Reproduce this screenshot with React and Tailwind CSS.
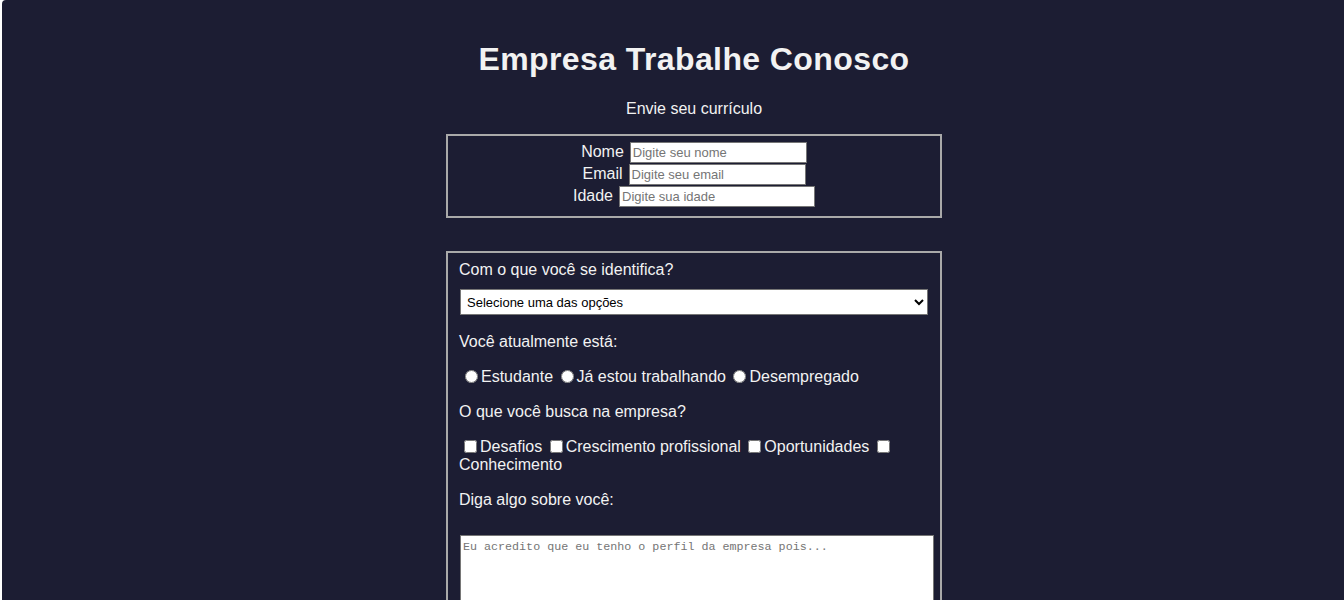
import { useState } from 'react';

export default function App() {
  const [situacao, setSituacao] = useState('');

  return (
    <div className="min-h-[600px] bg-white">
      <div
        className="ml-[2px] min-h-[600px] rounded-tl-[4px] bg-[#1c1d33] text-[#f2f2f2] pt-[40px] pb-10 pl-[42px]"
        style={{ fontFamily: 'Tahoma, "Liberation Sans", Arial, sans-serif' }}
      >
        <h1 className="text-center text-[32px] font-bold leading-[38px] tracking-[0.4px]">Empresa Trabalhe Conosco</h1>
        <p className="mt-[22px] text-center text-[16px] leading-[18px]">Envie seu currículo</p>

        <div className="mx-auto mt-[16px] w-[496px] border-2 border-[#a9a9a9] pt-[5px] pb-[9px]">
          <div className="flex h-[22px] items-center justify-center gap-[6px]">
            <label className="text-[16px]">Nome</label>
            <input
              type="text"
              placeholder="Digite seu nome"
              className="h-[21px] w-[177px] border border-[#767676] bg-white px-[2px] text-[13px] text-black placeholder:text-[#757575]"
            />
          </div>
          <div className="flex h-[22px] items-center justify-center gap-[6px]">
            <label className="text-[16px]">Email</label>
            <input
              type="email"
              placeholder="Digite seu email"
              className="h-[21px] w-[177px] border border-[#767676] bg-white px-[2px] text-[13px] text-black placeholder:text-[#757575]"
            />
          </div>
          <div className="flex h-[22px] items-center justify-center gap-[6px]">
            <label className="text-[16px]">Idade</label>
            <input
              type="text"
              placeholder="Digite sua idade"
              className="h-[21px] w-[196px] border border-[#767676] bg-white px-[2px] text-[13px] text-black placeholder:text-[#757575]"
            />
          </div>
        </div>

        <div className="mx-auto mt-[33px] w-[496px] border-2 border-[#a9a9a9] px-[11px] pt-[8px] pb-4 text-[16px] leading-[18px]">
          <p>Com o que você se identifica?</p>
          <select className="mt-[10px] ml-px block h-[26px] w-[468px] border border-[#767676] bg-white px-[2px] text-[13px] text-black">
            <option>Selecione uma das opções</option>
            <option>Front-end</option>
            <option>Back-end</option>
            <option>Full-stack</option>
          </select>

          <p className="mt-[18px]">Você atualmente está:</p>
          <div className="mt-[17px]">
            <label>
              <input
                type="radio"
                name="situacao"
                checked={situacao === 'estudante'}
                onChange={() => setSituacao('estudante')}
                className="m-0 ml-[6px] mr-[3px] h-[13px] w-[13px] align-[-1px]"
              />
              Estudante
            </label>{' '}
            <label>
              <input
                type="radio"
                name="situacao"
                checked={situacao === 'trabalhando'}
                onChange={() => setSituacao('trabalhando')}
                className="m-0 ml-[3px] mr-[3px] h-[13px] w-[13px] align-[-1px]"
              />
              Já estou trabalhando
            </label>{' '}
            <label>
              <input
                type="radio"
                name="situacao"
                checked={situacao === 'desempregado'}
                onChange={() => setSituacao('desempregado')}
                className="m-0 ml-[3px] mr-[3px] h-[13px] w-[13px] align-[-1px]"
              />
              Desempregado
            </label>
          </div>

          <p className="mt-[17px]">O que você busca na empresa?</p>
          <div className="mt-[17px] w-[440px]">
            <label>
              <input type="checkbox" className="m-0 ml-[5px] mr-[3px] h-[13px] w-[13px] align-[-1px]" />
              Desafios
            </label>{' '}
            <label>
              <input type="checkbox" className="m-0 ml-[3px] mr-[3px] h-[13px] w-[13px] align-[-1px]" />
              Crescimento profissional
            </label>{' '}
            <label>
              <input type="checkbox" className="m-0 ml-[3px] mr-[3px] h-[13px] w-[13px] align-[-1px]" />
              Oportunidades
            </label>{' '}
            <label>
              <input type="checkbox" className="m-0 ml-[3px] mr-[3px] h-[13px] w-[13px] align-[-1px]" />{' '}
              Conhecimento
            </label>
          </div>

          <p className="mt-[17px]">Diga algo sobre você:</p>
          <textarea
            placeholder="Eu acredito que eu tenho o perfil da empresa pois..."
            className="mt-[26px] ml-px block h-[100px] w-[474px] border border-[#767676] bg-white px-[2px] py-[2px] text-[11.7px] text-black placeholder:text-[#757575]"
            style={{ fontFamily: '"Liberation Mono", "Courier New", monospace' }}
          />
        </div>
      </div>
    </div>
  );
}
